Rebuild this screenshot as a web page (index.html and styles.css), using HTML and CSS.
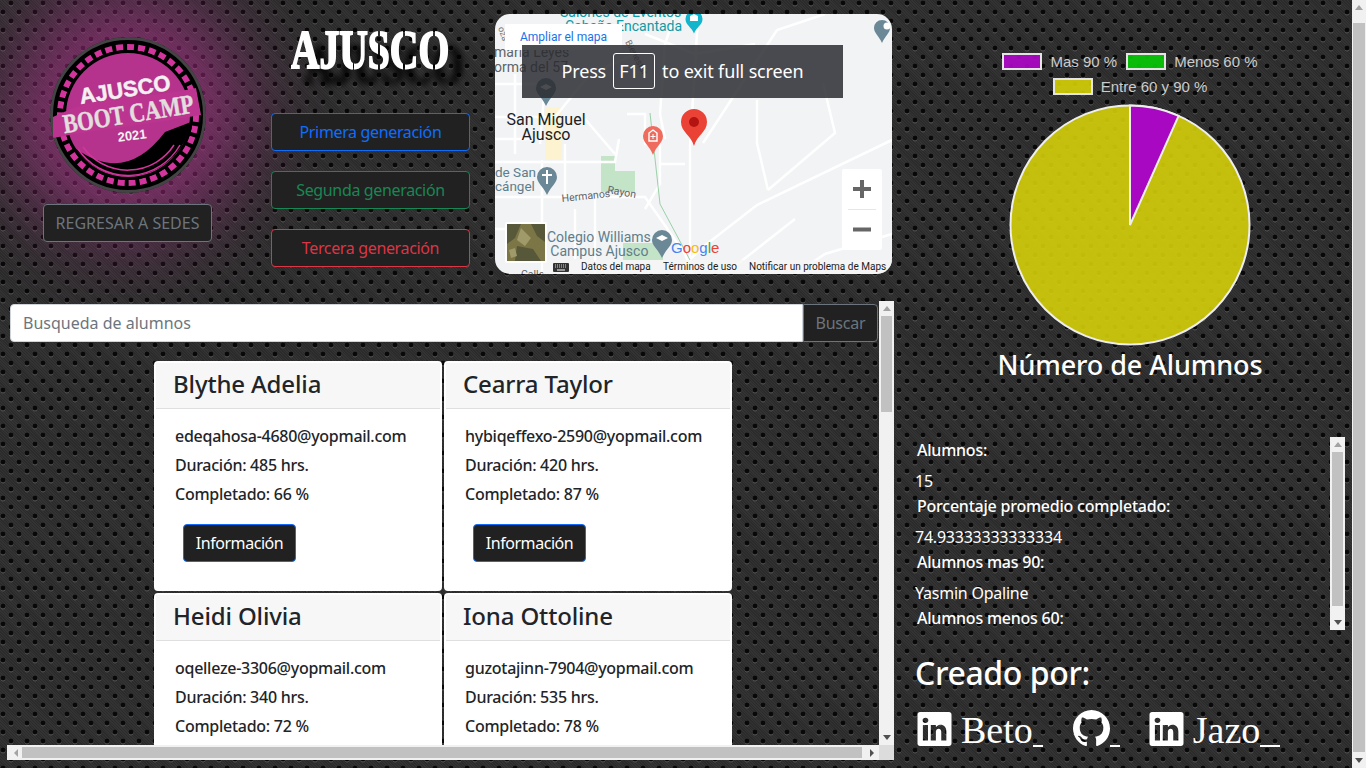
FILE: index.html
```html
<!DOCTYPE html>
<html>
<head>
  <title>Ajusco Boot Camp</title>
  <link rel="stylesheet" href="styles.css">
</head>
<body>
  <div class="page">
    <div class="main">
      <header class="top">
        <div class="logo-col">
          <svg class="logo" viewBox="0 0 156 156">
            <circle cx="78" cy="78" r="76.5" fill="#000" stroke="#444" stroke-width="3"/>
            <circle cx="78" cy="78" r="68" fill="none" stroke="#d2359c" stroke-width="6" stroke-dasharray="7 4"/>
            <circle cx="78" cy="78" r="65" fill="#000"/>
            <circle cx="78" cy="78" r="62" fill="#b5338c"/>
            <path d="M25 111 Q75 148 115 95 L141 85 A64 64 0 0 1 25 111 Z" fill="#000"/>
            <path d="M28 112 A60 60 0 0 0 130 108" fill="none" stroke="#d2359c" stroke-width="1.5"/>
            <path d="M33 110 A55 55 0 0 0 124 108" fill="none" stroke="#d2359c" stroke-width="1.5"/>
            <path d="M3 80 Q40 62 75 60 Q115 58 146 51 L151 78 Q115 84 75 90 Q40 94 3 101 Z" fill="#bb3590"/>
            <text class="logo-top" x="75" y="60" text-anchor="middle" transform="rotate(-9 75 53)" textLength="92" lengthAdjust="spacingAndGlyphs">AJUSCO</text>
            <text class="logo-mid" x="78" y="86" text-anchor="middle" transform="rotate(-9 78 76)" textLength="132" lengthAdjust="spacingAndGlyphs">BOOT CAMP</text>
            <text class="logo-year" x="82" y="103" text-anchor="middle" transform="rotate(-7 82 98)">2021</text>
          </svg>
          <button class="btn btn-back">REGRESAR A SEDES</button>
        </div>
        <div class="gen-col">
          <div class="brand"><h1>AJUSCO</h1></div>
          <button class="btn btn-blue">Primera generación</button>
          <button class="btn btn-green">Segunda generación</button>
          <button class="btn btn-red">Tercera generación</button>
        </div>
        <div class="map">
          <svg class="map-svg" viewBox="0 0 397 260">
            <rect width="397" height="260" fill="#f1f3f4"/>
            <rect x="50" y="93" width="17" height="53" fill="#fdf3d0"/>
            <path d="M106 142H120V157H140V178H106Z" fill="#c4e4c8"/>
            <rect x="128" y="229" width="40" height="17" fill="#c4e4c8"/>
            <g class="road">
              <path d="M195 260V133L202 19L205 0"/>
              <path d="M397 126L262 191L208 233L190 250"/>
              <path d="M208 129L282 16L330 0"/>
              <path d="M262 86V129L273 176"/>
              <path d="M328 69L340 119L273 176"/>
              <path d="M0 183H150L190 240L198 260"/>
              <path d="M47 146V260"/>
              <path d="M0 103H60L95 60L140 40"/>
              <path d="M0 70H50L45 130"/>
              <path d="M20 60V140"/>
              <path d="M70 130V183M90 105L120 140"/>
              <path d="M132 100H150V130H165V170L150 195"/>
              <path d="M165 150H190M170 30L165 100L170 125"/>
              <path d="M100 183V260M80 195V245M0 215H40"/>
              <path d="M150 20L200 40L260 30M180 0L170 30"/>
              <path d="M397 220L330 240L300 260"/>
              <path d="M230 260L300 205"/>
              <path d="M0 125H40M0 148H120L124 125"/>
            </g>
            <path d="M155 99L165 190L195 246" fill="none" stroke="#9bd0a8" stroke-width="1"/>
            <text class="map-poi" x="65" y="3">Salones de Eventos</text>
            <text class="map-poi" x="70" y="17">Cabaña Encantada</text>
            <path d="M190.500 5a8.500 8.500 0 1 1 17 0c0 6-6 8-8.500 14.500c-2.500-6.500-8.500-8.500-8.500-14.500z" fill="#12b5cb"/>
            <path d="M195 7V2l4-2 4 2V7z" fill="#fff"/>
            <text class="map-small" transform="translate(3 14) rotate(70)">oza</text>
            <text class="map-small" transform="translate(130 28) rotate(62)">Bienestar</text>
            <text class="map-grey" x="-1" y="43">maría Leyes</text>
            <text class="map-grey" x="-1" y="58">orma del 57</text>
            <path d="M42 76a10 10 0 1 1 20 0c0 6-6 9-10 18c-4-9-10-12-10-18z" fill="#6b8897" transform="translate(-1 -2)"/>
            <path d="M45 73l6-3 6 3-6 3z" fill="#fff"/>
            <text class="map-town" x="51" y="111" text-anchor="middle">San Miguel</text>
            <text class="map-town" x="51" y="126" text-anchor="middle">Ajusco</text>
            <text class="map-blue map-cut" x="0" y="163">de San</text>
            <text class="map-blue map-cut" x="0" y="177">cángel</text>
            <path d="M42 163a10 10 0 1 1 20 0c0 6-6 9-10 18c-4-9-10-12-10-18z" fill="#6b8897"/>
            <path d="M51 156h2v4h4v2h-4v8h-2v-8h-4v-2h4z" fill="#fff"/>
            <text class="map-road" transform="translate(67 188) rotate(-6)">Hermanos</text>
            <text class="map-road" transform="translate(112 179) rotate(10)">Rayon</text>
            <text class="map-blue" x="52" y="228">Colegio Williams</text>
            <text class="map-blue" x="48" y="242">- Campus Ajusco</text>
            <path d="M157 226a10 10 0 1 1 20 0c0 6-6 9-10 18c-4-9-10-12-10-18z" fill="#6b8897"/>
            <path d="M161 224l6-3 6 3-6 3z" fill="#fff"/>
            <path d="M379 14a8 8 0 1 1 16 0c0 5-5 8-8 15c-3-7-8-10-8-15z" fill="#6b8897"/>
            <circle cx="392" cy="12" r="3.500" fill="#fff"/>
            <path d="M148 122a10 10 0 1 1 20 0c0 7-7 10-10 19c-3-9-10-12-10-19z" fill="#ee6b5e"/>
            <path d="M154 119l4-3 4 3v8h-8z" fill="none" stroke="#fff" stroke-width="1.4"/>
            <path d="M158 120v5M155.500 122.500h5" stroke="#fff" stroke-width="1"/>
            <path d="M186 108a13 13 0 1 1 26 0c0 10-10 13-13 24c-3-11-13-14-13-24z" fill="#ea4335"/>
            <circle cx="199" cy="108" r="5" fill="#b31412"/>
            <text class="map-google" x="176" y="239"><tspan fill="#4285f4">G</tspan><tspan fill="#ea4335">o</tspan><tspan fill="#fbbc05">o</tspan><tspan fill="#4285f4">g</tspan><tspan fill="#34a853">l</tspan><tspan fill="#ea4335">e</tspan></text>
            <text class="map-road" x="26" y="264">Calle</text>
            <rect x="48" y="246" width="349" height="14" fill="#f5f5f5" fill-opacity="0.75"/>
            <rect x="58" y="249" width="16" height="9" rx="1" fill="#333"/>
            <path d="M60 251h12M60 253h12" stroke="#fff" stroke-width="0.8" stroke-dasharray="1 1"/>
            <path d="M62 256h8" stroke="#fff" stroke-width="1"/>
            <text class="map-attr" x="86" y="256">Datos del mapa</text>
            <text class="map-attr" x="168" y="256">Términos de uso</text>
            <text class="map-attr" x="254" y="256">Notificar un problema de Maps</text>
            <rect x="10" y="208" width="42" height="41" rx="2" fill="#fff"/>
            <rect x="12" y="210" width="38" height="37" fill="#7c7646"/>
            <path d="M12 210h14l-6 14-8 6zM36 210h14v18l-8-6zM22 232l16 3 8 12H20z" fill="#57573a"/>
            <path d="M26 214l10 10-6 8-8-6zM14 236l6-2 2 8-6 2z" fill="#a09a6a"/>
            <rect x="10" y="10" width="117" height="26" fill="#fff"/>
            <text class="map-link" x="25" y="27">Ampliar el mapa</text>
            <rect x="347" y="155" width="40" height="81" rx="2" fill="#fff"/>
            <path d="M353 195.500h28" stroke="#e6e6e6"/>
            <path d="M358 175h18M367 166v18" stroke="#666" stroke-width="4"/>
            <path d="M358 215.500h18" stroke="#666" stroke-width="4"/>
          </svg>
        </div>
      </header>

      <section class="panel">
        <div class="panel-row">
          <div class="panel-body">
            <form class="search">
              <input class="search-input" type="text" placeholder="Busqueda de alumnos">
              <button type="button" class="btn btn-search">Buscar</button>
            </form>
            <div class="cards">
              <div class="card">
                <div class="card-header">Blythe Adelia</div>
                <div class="card-body">
                  <p>edeqahosa-4680@yopmail.com</p>
                  <p>Duración: 485 hrs.</p>
                  <p>Completado: 66 %</p>
                  <button class="btn btn-info">Información</button>
                </div>
              </div>
              <div class="card">
                <div class="card-header">Cearra Taylor</div>
                <div class="card-body">
                  <p>hybiqeffexo-2590@yopmail.com</p>
                  <p>Duración: 420 hrs.</p>
                  <p>Completado: 87 %</p>
                  <button class="btn btn-info">Información</button>
                </div>
              </div>
              <div class="card">
                <div class="card-header">Heidi Olivia</div>
                <div class="card-body">
                  <p>oqelleze-3306@yopmail.com</p>
                  <p>Duración: 340 hrs.</p>
                  <p>Completado: 72 %</p>
                  <button class="btn btn-info">Información</button>
                </div>
              </div>
              <div class="card">
                <div class="card-header">Iona Ottoline</div>
                <div class="card-body">
                  <p>guzotajinn-7904@yopmail.com</p>
                  <p>Duración: 535 hrs.</p>
                  <p>Completado: 78 %</p>
                  <button class="btn btn-info">Información</button>
                </div>
              </div>
            </div>
          </div>
          <div class="vbar">
            <span class="arrow-up"></span>
            <div class="thumb thumb-panel"></div>
            <span class="arrow-down"></span>
          </div>
        </div>
        <div class="hbar">
          <span class="arrow-left"></span>
          <div class="hthumb"></div>
          <span class="arrow-right"></span>
          <div class="corner"></div>
        </div>
      </section>
    </div>

    <aside class="side">
      <div class="chart">
        <div class="legend">
          <div class="legend-row">
            <span class="swatch swatch-purple"></span><span class="legend-text">Mas 90 %</span>
            <span class="swatch swatch-green"></span><span class="legend-text">Menos 60 %</span>
          </div>
          <div class="legend-row">
            <span class="swatch swatch-yellow"></span><span class="legend-text">Entre 60 y 90 %</span>
          </div>
        </div>
        <svg class="pie" viewBox="0 0 242 242">
          <circle cx="121" cy="121" r="119.500" fill="#d9d408" fill-opacity="0.88" stroke="#eee" stroke-width="2"/>
          <path d="M121 121V1.500A119.500 119.500 0 0 1 169.600 11.800Z" fill="#a808c2" stroke="#eee" stroke-width="2"/>
        </svg>
        <h2 class="chart-title">Número de Alumnos</h2>
      </div>

      <div class="stats">
        <div class="stats-list">
          <p class="stat-label">Alumnos:</p>
          <p class="stat-value">15</p>
          <p class="stat-label">Porcentaje promedio completado:</p>
          <p class="stat-value">74.93333333333334</p>
          <p class="stat-label">Alumnos mas 90:</p>
          <p class="stat-value">Yasmin Opaline</p>
          <p class="stat-label">Alumnos menos 60:</p>
        </div>
        <div class="vbar">
          <span class="arrow-up"></span>
          <div class="thumb thumb-stats"></div>
          <span class="arrow-down"></span>
        </div>
      </div>

      <h2 class="credits">Creado por:</h2>
      <div class="links">
        <a class="link link-beto">
          <svg class="icon-in" viewBox="0 0 16 16"><path d="M0 1.146C0 .513.526 0 1.175 0h13.65C15.474 0 16 .513 16 1.146v13.708c0 .633-.526 1.146-1.175 1.146H1.175C.526 16 0 15.487 0 14.854V1.146zm4.943 12.248V6.169H2.542v7.225h2.401zm-1.2-8.212c.837 0 1.358-.554 1.358-1.248-.015-.709-.52-1.248-1.342-1.248-.822 0-1.359.54-1.359 1.248 0 .694.521 1.248 1.327 1.248h.016zm4.908 8.212V9.359c0-.216.016-.432.08-.586.173-.431.568-.878 1.232-.878.869 0 1.216.662 1.216 1.634v3.865h2.401V9.25c0-2.22-1.184-3.252-2.764-3.252-1.274 0-1.845.7-2.165 1.193v.025h-.016a5.54 5.54 0 0 1 .016-.025V6.169h-2.4c.03.678 0 7.225 0 7.225h2.4z"/></svg>
          <span class="link-name">Beto</span><span class="under"></span>
        </a>
        <a class="link link-git">
          <svg class="icon-git" viewBox="0 0 16 16"><path d="M8 0C3.58 0 0 3.58 0 8c0 3.54 2.29 6.53 5.47 7.59.4.07.55-.17.55-.38 0-.19-.01-.82-.01-1.49-2.01.37-2.53-.49-2.69-.94-.09-.23-.48-.94-.82-1.13-.28-.15-.68-.52-.01-.53.63-.01 1.08.58 1.23.82.72 1.21 1.87.87 2.33.66.07-.52.28-.87.51-1.07-1.78-.2-3.64-.89-3.64-3.95 0-.87.31-1.59.82-2.15-.08-.2-.36-1.02.08-2.12 0 0 .67-.21 2.2.82.64-.18 1.32-.27 2-.27.68 0 1.36.09 2 .27 1.53-1.04 2.2-.82 2.2-.82.44 1.1.16 1.92.08 2.12.51.56.82 1.27.82 2.15 0 3.07-1.87 3.75-3.65 3.95.29.25.54.73.54 1.48 0 1.07-.01 1.93-.01 2.2 0 .21.15.46.55.38A8.012 8.012 0 0 0 16 8c0-4.42-3.58-8-8-8z"/></svg>
          <span class="under"></span>
        </a>
        <a class="link link-jazo">
          <svg class="icon-in" viewBox="0 0 16 16"><path d="M0 1.146C0 .513.526 0 1.175 0h13.65C15.474 0 16 .513 16 1.146v13.708c0 .633-.526 1.146-1.175 1.146H1.175C.526 16 0 15.487 0 14.854V1.146zm4.943 12.248V6.169H2.542v7.225h2.401zm-1.2-8.212c.837 0 1.358-.554 1.358-1.248-.015-.709-.52-1.248-1.342-1.248-.822 0-1.359.54-1.359 1.248 0 .694.521 1.248 1.327 1.248h.016zm4.908 8.212V9.359c0-.216.016-.432.08-.586.173-.431.568-.878 1.232-.878.869 0 1.216.662 1.216 1.634v3.865h2.401V9.25c0-2.22-1.184-3.252-2.764-3.252-1.274 0-1.845.7-2.165 1.193v.025h-.016a5.54 5.54 0 0 1 .016-.025V6.169h-2.4c.03.678 0 7.225 0 7.225h2.4z"/></svg>
          <span class="link-name">Jazo</span><span class="under under-wide"></span>
        </a>
      </div>
    </aside>

    <div class="vbar page-bar">
      <span class="arrow-up"></span>
      <div class="thumb thumb-page"></div>
      <span class="arrow-down"></span>
    </div>
  </div>

  <div class="fs-toast">
    <span>Press</span><span class="key">F11</span><span>to exit full screen</span>
  </div>
</body>
</html>
```

FILE: styles.css
```css
* {
  box-sizing: border-box;
}
body {
  margin: 0;
  height: 768px;
  overflow: hidden;
  font-family: "Noto Sans", sans-serif;
  font-size: 16px;
  color: #fff;
  background-color: #2f2f2f;
  background-image:
    radial-gradient(circle at 11px 3px, #080808 2px, transparent 2.7px),
    radial-gradient(circle at 3px 12px, #080808 2px, transparent 2.7px),
    radial-gradient(circle at 11px 4.2px, #4c4c4c 2px, transparent 2.7px),
    radial-gradient(circle at 3px 13.2px, #4c4c4c 2px, transparent 2.7px),
    repeating-linear-gradient(45deg, #2b2b2b 0 1px, #333 1px 2px);
  background-size: 16px 18px, 16px 18px, 16px 18px, 16px 18px, auto;
}
p {
  margin: 0;
}
.page {
  display: flex;
  height: 768px;
}
.main {
  width: 894px;
  flex-shrink: 0;
}

/* header */
.top {
  display: flex;
  height: 301px;
  padding-top: 14px;
}
.logo-col {
  width: 255px;
  display: flex;
  flex-direction: column;
  align-items: center;
  padding-top: 23px;
}
.logo {
  width: 156px;
  height: 156px;
  border-radius: 50%;
  box-shadow: 0 0 85px 38px rgba(196, 50, 156, 0.58);
}
.logo-top {
  font: bold 22px "Liberation Sans", sans-serif;
  fill: #f4f0f2;
  stroke: #f4f0f2;
  stroke-width: 0.5;
}
.logo-mid {
  font: bold 27px "Liberation Serif", serif;
  fill: #e2dede;
  stroke: #e2dede;
  stroke-width: 0.5;
}
.logo-year {
  font: bold 13px "Liberation Sans", sans-serif;
  fill: #f4f0f2;
}
.btn {
  font-family: inherit;
  font-size: 16px;
  height: 38px;
  padding: 0 12px;
  background: #212121;
  border: 1px solid #6c757d;
  border-radius: 4px;
  color: #6c757d;
}
.btn-back {
  width: 169px;
  margin-top: 11px;
  padding: 0;
}
.gen-col {
  width: 199px;
  margin-left: 16px;
  display: flex;
  flex-direction: column;
  gap: 20px;
}
.gen-col .btn {
  letter-spacing: -0.35px;
}
.brand {
  height: 79px;
  display: flex;
  justify-content: center;
  filter: drop-shadow(14px 15px 3px rgba(0, 0, 0, 0.9));
}
.brand h1 {
  flex-shrink: 0;
  width: max-content;
  height: 62px;
  margin: 5px 0 0;
  font: bold 55px/62px "Liberation Serif", serif;
  -webkit-text-stroke: 2px #fff;
  color: #fff;
  transform: scaleX(0.72);
  -webkit-mask-image: linear-gradient(90deg, #000 39%, transparent 39%, transparent 40%, #000 40%, #000 55%, transparent 55%, transparent 56%, #000 56%, #000 71%, transparent 71%, transparent 72%, #000 72%, #000 90%, transparent 90%, transparent 91%, #000 91%);
  mask-image: linear-gradient(90deg, #000 39%, transparent 39%, transparent 40%, #000 40%, #000 55%, transparent 55%, transparent 56%, #000 56%, #000 71%, transparent 71%, transparent 72%, #000 72%, #000 90%, transparent 90%, transparent 91%, #000 91%);
}
.btn-blue {
  border-color: #0d6efd;
  color: #0d6efd;
}
.btn-green {
  border-color: #198754;
  color: #198754;
}
.btn-red {
  border-color: #dc3545;
  color: #dc3545;
}

/* map */
.map {
  width: 397px;
  height: 260px;
  margin-left: 25px;
  border-radius: 15px;
  overflow: hidden;
}
.map-svg {
  display: block;
  font-family: Roboto, sans-serif;
}
.road {
  fill: none;
  stroke: #fff;
  stroke-width: 2.5;
}
.map-poi {
  font-size: 14px;
  fill: #0f9aa5;
}
.map-grey {
  font-size: 14px;
  fill: #5f6368;
}
.map-town {
  font-size: 16px;
  fill: #202124;
}
.map-blue {
  font-size: 14px;
  fill: #5f7d8c;
}
.map-cut {
  font-size: 13.5px;
}
.map-road {
  font-size: 10.5px;
  fill: #5f6368;
}
.map-small {
  font-size: 9px;
  fill: #70757a;
}
.map-google {
  font: 15px "Liberation Sans", sans-serif;
}
.map-attr {
  font-size: 10px;
  fill: #222;
}
.map-link {
  font-size: 12px;
  fill: #1a73e8;
}
.fs-toast {
  position: absolute;
  top: 45px;
  left: 522px;
  width: 321px;
  height: 53px;
  display: flex;
  align-items: center;
  justify-content: center;
  gap: 7px;
  padding-bottom: 2px;
  font-size: 18px;
  letter-spacing: -0.15px;
  background: rgba(40, 42, 46, 0.84);
}
.key {
  width: 42px;
  height: 36px;
  line-height: 34px;
  text-align: center;
  border: 1px solid #fff;
  border-radius: 3px;
}

/* students panel */
.panel {
  width: 887px;
  height: 459px;
  margin-left: 7px;
}
.panel-row {
  display: flex;
  height: 444px;
}
.panel-body {
  width: 872px;
  padding: 3px 0 0 3px;
  overflow: hidden;
}
.search {
  display: flex;
  width: 868px;
  height: 38px;
}
.search-input {
  flex: 1;
  border: 1px solid #ced4da;
  border-radius: 4px 0 0 4px;
  padding: 0 12px;
  font-family: inherit;
  font-size: 16px;
  color: #212529;
}
.search-input::placeholder {
  color: #6c757d;
}
.btn-search {
  width: 75px;
  padding: 0;
  border-radius: 0 4px 4px 0;
  letter-spacing: -0.2px;
  color: #6c757d;
}
.cards {
  display: grid;
  grid-template-columns: 288px 288px;
  grid-auto-rows: 230px;
  gap: 2px;
  margin: 19px 0 0 144px;
}
.card {
  background: #fff;
  border-radius: 4px;
  padding: 2px;
  color: #212529;
}
.card-header {
  height: 46px;
  padding-left: 17px;
  font-size: 24px;
  font-weight: 500;
  line-height: 42px;
  letter-spacing: -0.15px;
  background: #f7f7f7;
  border-bottom: 1px solid #dfdfdf;
}
.card-body {
  padding: 15px 0 0 19px;
  font-weight: 500;
  letter-spacing: -0.27px;
}
.card-body p {
  height: 24px;
  line-height: 24px;
  margin-bottom: 5px;
}
.btn-info {
  margin: 13px 0 0 8px;
  width: 113px;
  padding: 0;
  border-color: #0d6efd;
  letter-spacing: -0.45px;
  color: #fff;
}

/* scrollbars */
.vbar {
  width: 15px;
  background: #f1f1f1;
  display: flex;
  flex-direction: column;
  align-items: center;
  flex-shrink: 0;
  position: relative;
}
.thumb {
  width: 11px;
  background: #c1c1c1;
}
.thumb-panel {
  height: 96px;
}
.thumb-stats {
  height: 154px;
}
.thumb-page {
  height: 729px;
  width: 12px;
  margin-top: 8px;
}
.arrow-up,
.arrow-down {
  width: 0;
  height: 0;
  border-left: 4px solid transparent;
  border-right: 4px solid transparent;
}
.arrow-up {
  margin: 5px 0;
  border-bottom: 5px solid #a3a3a3;
}
.arrow-down {
  position: absolute;
  bottom: 5px;
  border-top: 5px solid #505050;
}
.hbar {
  display: flex;
  align-items: center;
  height: 15px;
  background: #f1f1f1;
}
.arrow-left,
.arrow-right {
  width: 0;
  height: 0;
  border-top: 4px solid transparent;
  border-bottom: 4px solid transparent;
}
.arrow-left {
  margin: 0 4px 0 7px;
  border-right: 4px solid #a3a3a3;
}
.hthumb {
  width: 840px;
  height: 11px;
  background: #c1c1c1;
}
.arrow-right {
  margin-left: 8px;
  border-left: 4px solid #505050;
}
.corner {
  width: 15px;
  height: 15px;
  margin-left: auto;
  background: #dcdcdc;
}
.page-bar {
  width: 14px;
  height: 768px;
  margin-left: auto;
}

/* right column */
.side {
  width: 458px;
  flex-shrink: 0;
  padding-top: 49px;
}
.chart {
  margin-left: 14px;
  width: 444px;
  display: flex;
  flex-direction: column;
  align-items: center;
}
.legend {
  font: 15px/17px "Liberation Sans", sans-serif;
  color: #ccc;
}
.legend-row {
  display: flex;
  justify-content: center;
  align-items: center;
  height: 25px;
}
.swatch {
  width: 40px;
  height: 17px;
  border: 2px solid #e4e4e4;
  margin-right: 8px;
}
.legend-text {
  margin-right: 9px;
}
.legend-text:last-child {
  margin-right: 0;
}
.swatch-purple {
  background: rgba(172, 8, 199, 0.92);
}
.swatch-green {
  background: rgba(8, 200, 8, 0.92);
}
.swatch-yellow {
  background: rgba(214, 209, 8, 0.9);
}
.pie {
  display: block;
  width: 242px;
  height: 242px;
  margin-top: 5px;
}
.chart-title {
  margin: 0;
  height: 38px;
  font-size: 27px;
  font-weight: 500;
  line-height: 38px;
  letter-spacing: -0.1px;
  text-align: center;
}
.stats {
  display: flex;
  width: 430px;
  height: 193px;
  margin: 53px 0 0 21px;
  letter-spacing: -0.23px;
}
.stats-list {
  flex: 1;
  padding-top: 1px;
  overflow: hidden;
}
.stat-label {
  height: 24px;
  line-height: 24px;
  margin: 0 0 7px 2px;
  font-weight: 500;
}
.stat-value {
  height: 24px;
  line-height: 24px;
  margin: 0 0 1px;
}
.credits {
  margin: 21px 0 0 21px;
  height: 44px;
  font-size: 32px;
  font-weight: 500;
  line-height: 44px;
  letter-spacing: -0.4px;
}
.links {
  display: flex;
  align-items: flex-end;
  margin: 14px 0 0 23px;
  height: 38px;
  font: 38px/38px "Liberation Serif", serif;
}
.link {
  display: flex;
  align-items: flex-end;
  color: #fff;
}
.link svg {
  fill: #fff;
  display: block;
}
.icon-in {
  width: 35px;
  height: 34px;
  margin: 0 9px 1px 0;
}
.icon-git {
  width: 37px;
  height: 37px;
}
.link-name {
  margin-bottom: -2px;
}
.link-git {
  margin-left: 30px;
}
.link-jazo {
  margin-left: 29px;
}
.under {
  display: block;
  width: 10px;
  height: 2px;
  background: #fff;
}
.under-wide {
  width: 20px;
}
```
